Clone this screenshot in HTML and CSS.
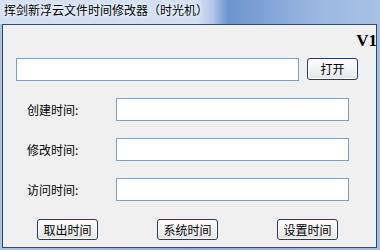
FILE: index.html
```html
<!DOCTYPE html>
<html>
<head>
<meta charset="utf-8">
<link rel="stylesheet" href="styles.css">
</head>
<body>
<div class="window">
  <div class="titlebar"><span class="title">挥剑新浮云文件时间修改器（时光机）</span></div>
  <div class="client">
    <div class="head"><span class="ver">V1</span></div>
    <div class="pathrow">
      <input class="field path" type="text">
      <button class="btn open">打开</button>
    </div>
    <div class="rows">
      <div class="row"><span class="label">创建时间:</span><input class="field time" type="text"></div>
      <div class="row"><span class="label">修改时间:</span><input class="field time" type="text"></div>
      <div class="row"><span class="label">访问时间:</span><input class="field time" type="text"></div>
    </div>
    <div class="actions">
      <button class="btn act">取出时间</button>
      <button class="btn act">系统时间</button>
      <button class="btn act">设置时间</button>
    </div>
  </div>
</div>
</body>
</html>
```

FILE: styles.css
```css
html, body {
  margin: 0;
  padding: 0;
  width: 380px;
  height: 250px;
  overflow: hidden;
  font-family: "Noto Sans CJK SC", "Liberation Sans", sans-serif;
  font-size: 12px;
}

.window {
  width: 380px;
  height: 250px;
  box-sizing: border-box;
  padding: 0 3px 2px 2px;
  display: flex;
  flex-direction: column;
  background: linear-gradient(to right, #a9c2e6 0, #8fb0de 50%, #a3bde3 100%);
}

.titlebar {
  height: 24px;
  flex: none;
  margin: 0 -3px 0 -2px;
  padding-left: 4px;
  display: flex;
  align-items: flex-start;
  background: linear-gradient(to right, #d5e1f2 0, #d3dff1 198px, #b3c8e8 212px, #6c94cf 228px, #7fa2d6 262px, #9ab6e0 310px, #a8c1e5 380px);
}

.title {
  color: #000;
  line-height: 20px;
  text-shadow: 0 0 6px #eef3fa, 0 0 3px #ffffff;
}

.client {
  flex: 1;
  border: 1px solid #33496a;
  background: #f0f0f0;
  display: flex;
  flex-direction: column;
  overflow: hidden;
}

.head {
  height: 33px;
  display: flex;
  justify-content: flex-end;
  align-items: flex-start;
}

.ver {
  font-family: "Liberation Serif", serif;
  font-weight: bold;
  font-size: 17px;
  line-height: 17px;
  margin-top: 7px;
  margin-right: -1px;
  color: #000;
}

.field {
  box-sizing: border-box;
  margin: 0;
  padding: 0;
  border: 1px solid #7d9fc2;
  background: #fff;
  outline: none;
  font: inherit;
}

.pathrow {
  display: flex;
  align-items: flex-start;
  gap: 8px;
  padding-left: 13px;
}

.path {
  width: 283px;
  height: 23px;
}

.btn {
  box-sizing: border-box;
  margin: 0;
  padding: 0;
  border: 1px solid #1d3d68;
  border-radius: 3px;
  background: linear-gradient(to bottom, #fdfdfd 0, #f2f2f2 50%, #e4e4e4 100%);
  box-shadow: inset 0 0 0 1px #ffffff;
  font-family: "Noto Sans CJK SC", sans-serif;
  font-size: 12px;
  line-height: 16px;
  color: #000;
}

.open {
  width: 51px;
  height: 22px;
}

.rows {
  display: flex;
  flex-direction: column;
  gap: 17px;
  margin-top: 17px;
}

.row {
  display: flex;
  align-items: center;
}

.label {
  flex: none;
  width: 113px;
  padding-left: 24px;
  box-sizing: border-box;
  color: #000;
  line-height: 14px;
}

.time {
  width: 233px;
  height: 23px;
}

.actions {
  display: flex;
  gap: 59px;
  padding-left: 34px;
  margin-top: 18px;
}

.act {
  width: 61px;
  height: 21px;
}
```
